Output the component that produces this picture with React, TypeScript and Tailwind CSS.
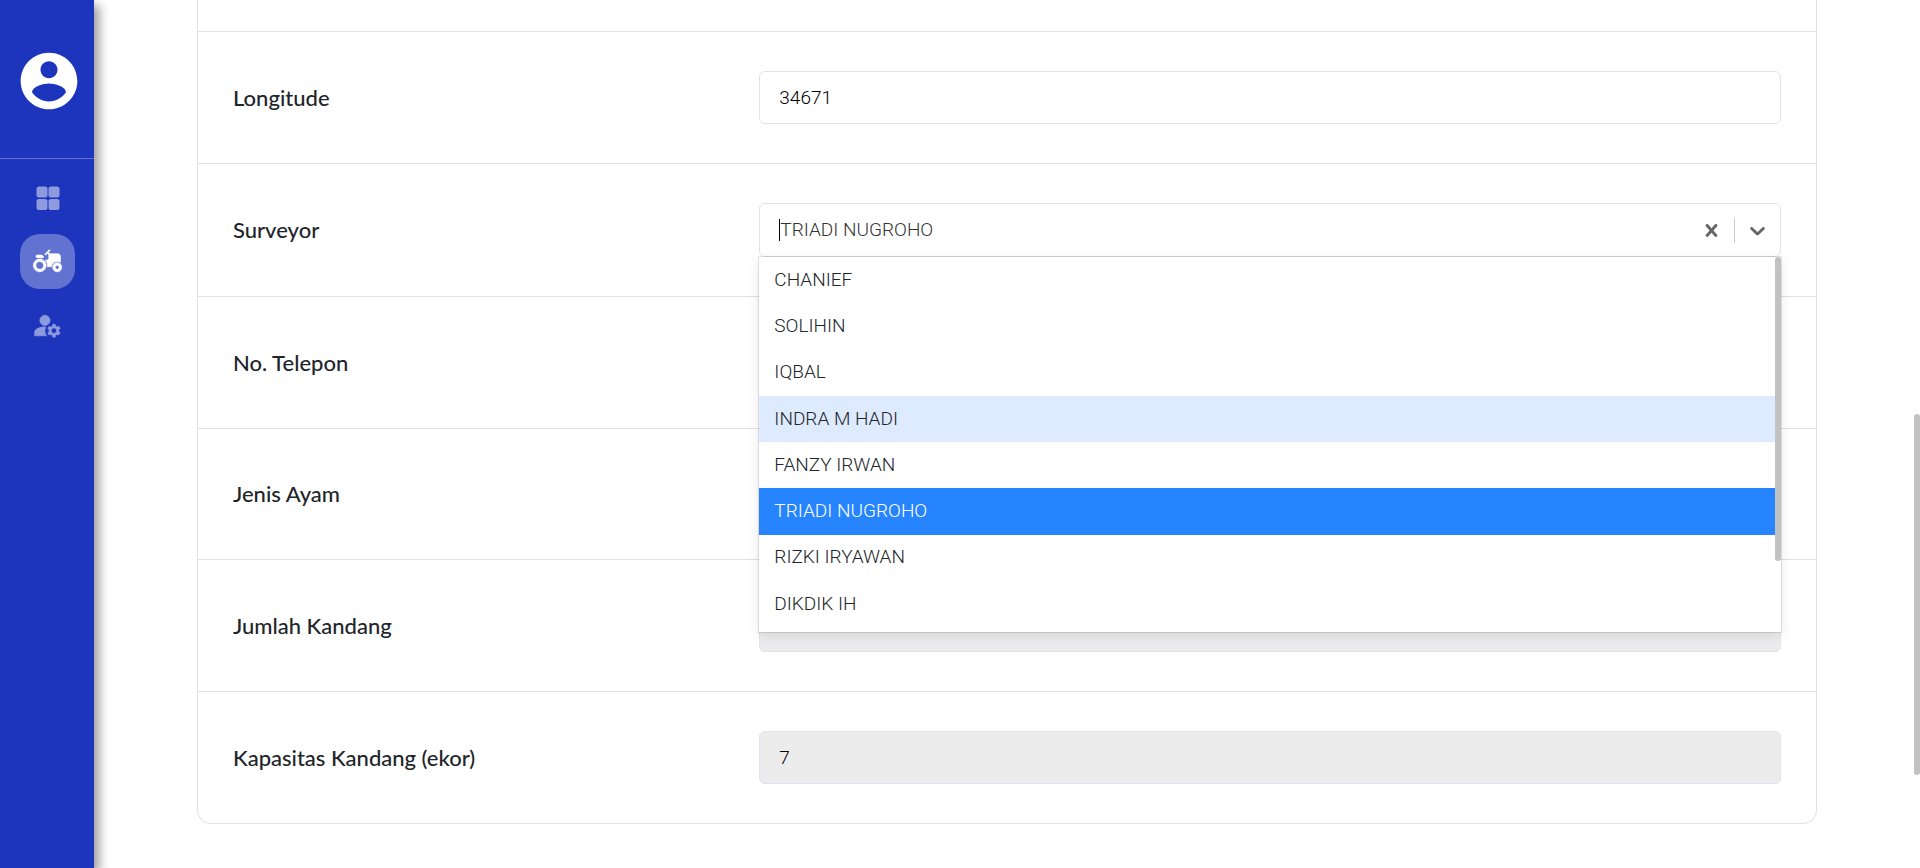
import { useState } from "react";
import { MdAgriculture, MdManageAccounts } from "react-icons/md";

const surveyors = [
  "CHANIEF",
  "SOLIHIN",
  "IQBAL",
  "INDRA M HADI",
  "FANZY IRWAN",
  "TRIADI NUGROHO",
  "RIZKI IRYAWAN",
  "DIKDIK IH",
];

const rowClass =
  "grid grid-cols-[34fr_66fr] items-center border-b border-[#dee2e6] px-[35px] py-[39px]";
const labelClass = "text-[22px] leading-7 font-medium text-[#212529]";
const inputClass =
  "w-full rounded-md border border-[#e2e2ee] px-[19px] font-[Roboto,sans-serif] text-[19px] font-light text-black outline-none";
const navClass = "flex size-[55px] items-center justify-center rounded-[20px] text-white";

type FieldProps = { id: string; label: string; value: string; disabled?: boolean; short?: boolean };

function Field({ id, label, value, disabled, short }: FieldProps) {
  return (
    <div className={rowClass}>
      <label htmlFor={id} className={labelClass}>
        {label}
      </label>
      <input
        id={id}
        type="text"
        defaultValue={value}
        disabled={disabled}
        className={`${inputClass} ${short ? "h-[52px]" : "h-[53px]"} ${disabled ? "bg-[#ececec]" : "bg-white"}`}
      />
    </div>
  );
}

function SurveyorSelect() {
  const [selected, setSelected] = useState("TRIADI NUGROHO");
  const [focused, setFocused] = useState("INDRA M HADI");
  return (
    <div className="relative font-[Roboto,sans-serif] text-[19px] font-light">
      <div className="flex h-[54px] items-center rounded-md border border-[#e2e2ee] bg-white pl-[19px]">
        <span className="h-[22px] w-px bg-black" />
        <input
          id="surveyor"
          type="text"
          role="combobox"
          aria-expanded="true"
          aria-controls="surveyor-list"
          readOnly
          value={selected}
          className="min-w-0 flex-1 text-[#333333] outline-none"
        />
        <button type="button" aria-label="Clear" onClick={() => setSelected("")} className="p-2.5 text-[#666666]">
          <svg width="25" height="25" viewBox="0 0 20 20" fill="currentColor">
            <path d="M14.348 14.849c-0.469 0.469-1.229 0.469-1.697 0l-2.651-3.030-2.651 3.029c-0.469 0.469-1.229 0.469-1.697 0-0.469-0.469-0.469-1.229 0-1.697l2.758-3.15-2.759-3.152c-0.469-0.469-0.469-1.228 0-1.697s1.228-0.469 1.697 0l2.652 3.031 2.651-3.031c0.469-0.469 1.228-0.469 1.697 0s0.469 1.229 0 1.697l-2.758 3.152 2.758 3.15c0.469 0.469 0.469 1.229 0 1.698z" />
          </svg>
        </button>
        <span className="h-[25px] w-px bg-[#cccccc]" />
        <button type="button" aria-label="Toggle options" className="p-2.5 text-[#666666]">
          <svg width="25" height="25" viewBox="0 0 20 20" fill="currentColor">
            <path d="M4.516 7.548c0.436-0.446 1.043-0.481 1.576 0l3.908 3.747 3.908-3.747c0.533-0.481 1.141-0.446 1.574 0 0.436 0.445 0.408 1.197 0 1.615-0.406 0.418-4.695 4.502-4.695 4.502-0.217 0.223-0.502 0.335-0.787 0.335s-0.57-0.112-0.789-0.335c0 0-4.287-4.084-4.695-4.502s-0.436-1.17 0-1.615z" />
          </svg>
        </button>
      </div>
      <div className="absolute inset-x-0 top-full z-10 h-[375px] bg-white pr-1.5 shadow-[0_0_0_1px_rgba(0,0,0,0.1),0_4px_11px_rgba(0,0,0,0.1)]">
        <div id="surveyor-list" role="listbox" aria-label="Surveyor" className="grid h-[370px] grid-rows-8">
          {surveyors.map((name) => (
            <button
              key={name}
              type="button"
              role="option"
              aria-selected={name === selected}
              onMouseEnter={() => setFocused(name)}
              onClick={() => setSelected(name)}
              className={`px-[15px] text-left ${
                name === selected
                  ? "bg-[#2684ff] text-white"
                  : name === focused
                    ? "bg-[#deebff] text-[#212529]"
                    : "bg-white text-[#212529]"
              }`}
            >
              {name}
            </button>
          ))}
        </div>
        <span className="absolute top-0 right-0 h-[304px] w-1.5 rounded-full bg-[#c2c2c2]" />
      </div>
    </div>
  );
}

export default function App() {
  return (
    <div className="relative flex h-screen overflow-hidden bg-white font-[Lato,sans-serif]">
      <aside className="z-20 flex w-[94px] shrink-0 flex-col bg-[#1d35bd] shadow-[5px_5px_10px_rgba(0,0,0,0.4)]">
        <a href="#profile" aria-label="Profile" className="flex h-[159px] justify-center border-b border-white/30 pt-[47px] pl-1 text-white">
          <svg width="68" height="68" viewBox="0 0 24 24" fill="currentColor">
            <path d="M12 2C6.48 2 2 6.48 2 12s4.48 10 10 10 10-4.48 10-10S17.52 2 12 2zm0 3c1.66 0 3 1.34 3 3s-1.34 3-3 3-3-1.34-3-3 1.34-3 3-3zm0 14.2c-2.5 0-4.71-1.28-6-3.22.03-1.99 4-3.08 6-3.08 1.99 0 5.97 1.09 6 3.08-1.29 1.94-3.5 3.22-6 3.22z" />
          </svg>
        </a>
        <nav className="flex flex-col items-center gap-[9px] pt-[11px] pl-px">
          <a href="#dashboard" aria-label="Dashboard" className={navClass}>
            <svg width="26" height="26" viewBox="0 0 26 26" fill="currentColor" className="opacity-50">
              <rect x="1.5" y="1.5" width="11" height="11" rx="2.5" />
              <rect x="13.5" y="1.5" width="11" height="11" rx="2.5" />
              <rect x="1.5" y="14" width="11" height="11" rx="2.5" />
              <rect x="13.5" y="14" width="11" height="11" rx="2.5" />
            </svg>
          </a>
          <a href="#farm" aria-label="Farm" className={`${navClass} bg-white/30`}>
            <MdAgriculture
              size={31}
              stroke="currentColor"
              strokeWidth={0.5}
              className="[&>path[fill=none]]:stroke-none"
            />
          </a>
          <a href="#users" aria-label="Users" className={navClass}>
            <MdManageAccounts
              size={31}
              stroke="currentColor"
              strokeWidth={0.4}
              className="opacity-50 [&>path[fill=none]]:stroke-none"
            />
          </a>
        </nav>
      </aside>
      <main className="min-w-0 flex-1 px-[103px]">
        <form className="rounded-b-[14px] border-x border-b border-[#dee2e6] [&>*:last-child]:border-b-0">
          <div className="h-8 border-b border-[#dee2e6]" />
          <Field id="longitude" label="Longitude" value="34671" />
          <div className={rowClass}>
            <label htmlFor="surveyor" className={labelClass}>
              Surveyor
            </label>
            <SurveyorSelect />
          </div>
          <Field id="telepon" label="No. Telepon" value="" />
          <Field id="jenis" label="Jenis Ayam" value="" short />
          <Field id="jumlah" label="Jumlah Kandang" value="1" disabled />
          <Field id="kapasitas" label="Kapasitas Kandang (ekor)" value="7" disabled />
        </form>
      </main>
      <span className="absolute top-[414px] right-0 h-[361px] w-1.5 rounded-full bg-[#c2c2c2]" />
    </div>
  );
}
